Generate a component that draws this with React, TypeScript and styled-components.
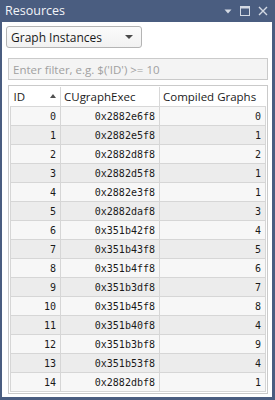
import React from "react";
import styled, { createGlobalStyle } from "styled-components";

const GlobalStyle = createGlobalStyle`
  html, body {
    margin: 0;
    padding: 0;
    width: 275px;
    height: 400px;
    overflow: hidden;
  }
  body {
    font-family: "Open Sans", "Noto Sans", sans-serif;
  }
`;

const rows: [number, string, number][] = [
  [0, "0x2882e6f8", 0],
  [1, "0x2882e5f8", 1],
  [2, "0x2882d8f8", 2],
  [3, "0x2882d5f8", 1],
  [4, "0x2882e3f8", 1],
  [5, "0x2882daf8", 3],
  [6, "0x351b42f8", 4],
  [7, "0x351b43f8", 5],
  [8, "0x351b4ff8", 6],
  [9, "0x351b3df8", 7],
  [10, "0x351b45f8", 8],
  [11, "0x351b40f8", 4],
  [12, "0x351b3bf8", 9],
  [13, "0x351b53f8", 4],
  [14, "0x2882dbf8", 1],
];

const Panel = styled.div`
  width: 275px;
  height: 400px;
  box-sizing: border-box;
  background: #4a5d80;
  padding: 0 3px 3px 2px;
  display: flex;
  flex-direction: column;
`;

const TitleBar = styled.div`
  height: 22px;
  display: flex;
  align-items: center;
  padding: 0 4px 0 3px;
  color: #f2f4f8;
  font-size: 12.5px;
`;

const Title = styled.span`
  flex: 1;
  margin-top: -1px;
`;

const TitleIcons = styled.div`
  display: flex;
  align-items: center;
  gap: 8px;
`;

const Body = styled.div`
  flex: 1;
  background: #ffffff;
  display: flex;
  flex-direction: column;
  padding: 4px 4px 3px 6px;
  min-height: 0;
`;

const Dropdown = styled.div`
  width: 136px;
  height: 22px;
  box-sizing: border-box;
  margin-left: -2px;
  border: 1px solid #b4b4b4;
  border-radius: 3px;
  background: linear-gradient(#fbfbfb, #f1f1f1);
  display: flex;
  align-items: center;
  justify-content: space-between;
  padding: 0 8px 0 4px;
  font-size: 12px;
  color: #1a1a1a;
`;

const Caret = styled.span`
  width: 0;
  height: 0;
  border-left: 4px solid transparent;
  border-right: 4px solid transparent;
  border-top: 4px solid #4a4a4a;
`;

const Filter = styled.div`
  margin-top: 10px;
  height: 22px;
  box-sizing: border-box;
  border: 1px solid #cacaca;
  background: #f4f4f4;
  display: flex;
  align-items: center;
  padding: 0 4px;
  font-size: 11.5px;
  color: #a0a0a0;
`;

const GridBox = styled.div`
  margin-top: 5px;
  flex: 1;
  border: 1px solid #cacaca;
  padding: 1px 3px 0 1px;
  min-height: 0;
  overflow: hidden;
`;

const Table = styled.table`
  border-collapse: collapse;
  width: 255px;
  table-layout: fixed;
`;

const Col = styled.col<{ $w: number }>`
  width: ${(p) => p.$w}px;
`;

const HeadCell = styled.th`
  height: 19px;
  padding: 0 3px;
  text-align: left;
  font-weight: normal;
  font-size: 11.5px;
  color: #1a1a1a;
  background: #ffffff;
  border-left: 1px solid #d8d8d8;
  border-bottom: 1px solid #d8d8d8;
  position: relative;
  white-space: nowrap;
  overflow: hidden;
  &:first-child {
    border-left: none;
  }
`;

const SortArrow = styled.span`
  position: absolute;
  right: 4px;
  top: 7px;
  width: 0;
  height: 0;
  border-left: 3.5px solid transparent;
  border-right: 3.5px solid transparent;
  border-bottom: 4px solid #505050;
`;

const Row = styled.tr<{ $odd: boolean }>`
  background: ${(p) => (p.$odd ? "#ececec" : "#f7f7f7")};
`;

const Cell = styled.td`
  height: 18px;
  padding: 0 4px 0 0;
  text-align: right;
  font-family: "DejaVu Sans Mono", "Liberation Mono", monospace;
  font-size: 10px;
  color: #1a1a1a;
  border: 1px solid #d6d6d6;
`;

const App = () => (
  <>
    <GlobalStyle />
    <Panel>
      <TitleBar>
        <Title>Resources</Title>
        <TitleIcons>
          <svg width="8" height="5" viewBox="0 0 8 5">
            <path d="M0.5 0.5 L7.5 0.5 L4 4.5 Z" fill="#d3d9e3" />
          </svg>
          <svg width="10" height="10" viewBox="0 0 10 10">
            <rect x="0.5" y="0.5" width="9" height="9" fill="none" stroke="#d3d9e3" />
            <rect x="0.5" y="0.5" width="9" height="2" fill="#d3d9e3" />
          </svg>
          <svg width="10" height="10" viewBox="0 0 10 10">
            <path d="M1 1 L9 9 M9 1 L1 9" stroke="#d3d9e3" strokeWidth="1.4" />
          </svg>
        </TitleIcons>
      </TitleBar>
      <Body>
        <Dropdown>
          <span>Graph Instances</span>
          <Caret />
        </Dropdown>
        <Filter>Enter filter, e.g. $('ID') &gt;= 10</Filter>
        <GridBox>
          <Table>
            <colgroup>
              <Col $w={50} />
              <Col $w={99} />
              <Col $w={106} />
            </colgroup>
            <thead>
              <tr>
                <HeadCell>
                  ID
                  <SortArrow />
                </HeadCell>
                <HeadCell>CUgraphExec</HeadCell>
                <HeadCell>Compiled Graphs</HeadCell>
              </tr>
            </thead>
            <tbody>
              {rows.map(([id, exec, count]) => (
                <Row key={id} $odd={id % 2 === 1}>
                  <Cell>{id}</Cell>
                  <Cell>{exec}</Cell>
                  <Cell>{count}</Cell>
                </Row>
              ))}
            </tbody>
          </Table>
        </GridBox>
      </Body>
    </Panel>
  </>
);

export default App;
